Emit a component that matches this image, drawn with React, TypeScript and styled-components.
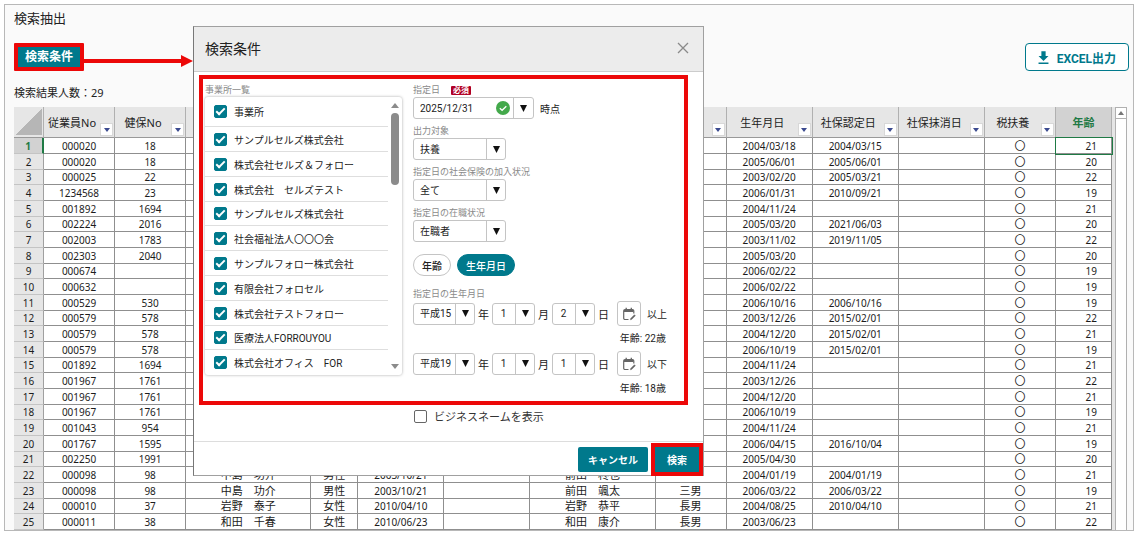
import React from "react";
import styled, { createGlobalStyle, css } from "styled-components";

const TEAL = "#00798c";
const RED = "#ec0808";
const GREEN = "#1f7a45";

const GlobalStyle = createGlobalStyle`
  *, *::before, *::after { box-sizing: border-box; }
  body {
    margin: 0;
    background: #fff;
    color: #222;
    font-family: "Noto Sans", "Noto Sans CJK JP", sans-serif;
  }
  button, input, select { font-family: inherit; margin: 0; }
`;

const Frame = styled.main`
  position: relative;
  margin: 4px 5px 4px 4px;
  padding: 5px 6px 0 9px;
  border: 1px solid #b8b8b8;
  background: #fafafa;
`;

const PageTitle = styled.h1`
  margin: 0;
  font-size: 13px;
  font-weight: 400;
  line-height: 16px;
`;

const Toolbar = styled.div`
  display: flex;
  justify-content: space-between;
  margin: 17px -2px 0 0;
`;

const ConditionButton = styled.button`
  height: 28px;
  padding: 0 7px;
  border: 4px solid ${RED};
  border-radius: 1px;
  background: ${TEAL};
  color: #fff;
  font-size: 12px;
  font-weight: 700;
  line-height: 20px;
`;

const ExcelButton = styled.button`
  display: flex;
  align-items: center;
  gap: 5px;
  height: 28px;
  padding: 0 12px 0 9px;
  border: 1px solid ${TEAL};
  border-radius: 4px;
  background: #fff;
  color: ${TEAL};
  font-family: Roboto, "Noto Sans CJK JP", sans-serif;
  font-size: 12px;
  font-weight: 700;
`;

const ResultCount = styled.p`
  margin: 14px 0 6px;
  font-size: 11px;
  line-height: 16px;
`;

const Sheet = styled.div`
  display: flex;
  gap: 3px;
  background: #e6e6e6;
`;

const Grid = styled.table`
  flex: 1;
  min-width: 0;
  table-layout: fixed;
  border-collapse: separate;
  border-spacing: 0;
  background: #fff;
  color: #1c1c1c;
`;

const HeadCell = styled.th<{ $selected?: boolean }>`
  height: 31px;
  padding: 0;
  border-right: 1px solid #b0b0b0;
  border-bottom: 1px solid #999;
  background: ${(p) => (p.$selected ? "#d2d2d2" : "#e6e6e6")};
  color: ${(p) => (p.$selected ? GREEN : "#222")};
  font-size: 11px;
  font-weight: ${(p) => (p.$selected ? 700 : 400)};
  white-space: nowrap;
`;

const Corner = styled.th`
  padding: 0;
  border-right: 1px solid #b0b0b0;
  border-bottom: 1px solid #999;
  background:
    linear-gradient(to bottom right, transparent 50%, #b6b6b6 50%) 2px 1px / 26px 27px no-repeat,
    #e6e6e6;
`;

const HeadInner = styled.div`
  display: flex;
  align-items: center;
  height: 30px;
`;

const HeadText = styled.span`
  flex: 1;
  text-align: center;
`;

const FilterButton = styled.button`
  display: flex;
  align-items: center;
  justify-content: center;
  align-self: flex-end;
  width: 13px;
  height: 13px;
  margin: 0 1px 1px 0;
  padding: 0;
  border: 1px solid #d8d8d8;
  background: #fff;
`;

const Row = styled.tr`
  height: 16px;
  &:nth-child(3n) { height: 15px; }
`;

const RowHead = styled.th<{ $selected?: boolean }>`
  padding: 0;
  border-right: 1px solid #a0a0a0;
  border-bottom: 1px solid #c4c4c4;
  background: #e6e6e6;
  font-size: 10px;
  font-weight: 400;
  line-height: 14px;
  ${(p) =>
    p.$selected &&
    css`
      border-right: 2px solid ${GREEN};
      background: #d2d2d2;
      color: ${GREEN};
      font-weight: 700;
    `}
`;

const Cell = styled.td<{ $kind?: "kanji" | "age"; $active?: boolean }>`
  padding: ${(p) => (p.$kind === "age" ? "0 14px 0 0" : "0")};
  border-right: 1px solid #8f8f8f;
  border-bottom: 1px solid #8f8f8f;
  font-size: ${(p) => (p.$kind === "kanji" ? 11 : 10)}px;
  line-height: 14px;
  text-align: ${(p) => (p.$kind === "age" ? "right" : "center")};
  white-space: nowrap;
  ${(p) => p.$active && `outline: 1px solid ${GREEN};`}
`;

const GridScroll = styled.div`
  width: 12px;
  border: 1px solid #b0b0b0;
  border-bottom: 0;
  background: #fff;
`;

const GridScrollUp = styled.div`
  display: flex;
  align-items: center;
  justify-content: center;
  height: 11px;
  border-bottom: 1px solid #b0b0b0;
`;

const Arrow = styled.svg`
  position: absolute;
  left: 78px;
  top: 50px;
`;

const Dialog = styled.section`
  position: absolute;
  left: 188px;
  top: 21px;
  width: 511px;
  max-width: calc(100% - 188px);
  border: 1px solid #a0a0a0;
  border-left-color: #777;
  background: #fff;
  font-family: Roboto, "Noto Sans CJK JP", sans-serif;
  font-size: 10px;
`;

const DialogHeader = styled.header`
  display: flex;
  align-items: center;
  justify-content: space-between;
  height: 45px;
  padding: 0 14px 2px 11px;
  border-bottom: 1px solid #ccc;
  background: #ececec;
`;

const DialogTitle = styled.h2`
  margin: 0;
  font-size: 14px;
  font-weight: 400;
`;

const CloseButton = styled.button`
  display: flex;
  padding: 0;
  border: 0;
  background: none;
`;

const Conditions = styled.div`
  display: flex;
  gap: 11px;
  margin: 3px 15px 0 5px;
  padding: 5px 0 0 2px;
  border: 4px solid ${RED};
`;

const Label = styled.label`
  display: flex;
  align-items: center;
  gap: 11px;
  margin-bottom: 1px;
  color: #8a8a8a;
  font-size: 9px;
  line-height: 12px;
`;

const OfficePane = styled.div`
  width: 197px;
`;

const OfficeBox = styled.div`
  display: flex;
  border-radius: 3px;
  box-shadow: 0 0 3px rgba(0, 0, 0, 0.35);
`;

const OfficeList = styled.ul`
  flex: 1;
  margin: 0;
  padding: 0;
  list-style: none;
`;

const OfficeItem = styled.li`
  height: 25px;
  border-bottom: 1px solid #dedede;
  &:first-child { height: 30px; }
  &:nth-child(5n) { height: 24px; }
  &:last-child { border-bottom: 0; }
`;

const OfficeLabel = styled.label`
  display: flex;
  align-items: center;
  gap: 7px;
  height: 100%;
  padding-left: 9px;
  color: #222;
`;

const Checkbox = styled.input`
  flex: none;
  appearance: none;
  width: 13px;
  height: 13px;
  border: 1px solid #666;
  border-radius: 2px;
  background: #fff;
  &:checked {
    border-color: ${TEAL};
    background: ${TEAL};
  }
  &:checked::after {
    content: "";
    display: block;
    width: 9px;
    height: 5px;
    margin: 2px 0 0 1px;
    border: solid #fff;
    border-width: 0 0 2px 2px;
    transform: rotate(-45deg);
  }
`;

const ListScroll = styled.div`
  display: flex;
  flex-direction: column;
  align-items: center;
  width: 14px;
  padding: 6px 0;
`;

const ListThumb = styled.div`
  width: 8px;
  height: 72px;
  margin: 5px 0 auto;
  border-radius: 4px;
  background: #8b8b8b;
`;

const Fields = styled.div`
  display: flex;
  flex: 1;
  flex-direction: column;
`;

const Field = styled.div`
  & + & { margin-top: 6px; }
`;

const Required = styled.span`
  padding: 0 2px;
  border-radius: 1px;
  background: #b00024;
  color: #fff;
  font-size: 8px;
  font-weight: 700;
  line-height: 9px;
`;

const Line = styled.div`
  display: flex;
  align-items: center;
  gap: 6px;
  color: #222;
`;

const DateBox = styled.div`
  display: flex;
  align-items: center;
  width: 121px;
  height: 22px;
  border: 1px solid #c4c4c4;
  border-radius: 3px;
`;

const DateInput = styled.input`
  flex: 1;
  min-width: 0;
  padding: 0 0 0 6px;
  border: 0;
  background: none;
  color: #222;
  font-size: 10px;
`;

const DropButton = styled.button`
  display: flex;
  align-items: center;
  justify-content: center;
  width: 20px;
  height: 20px;
  margin-left: 3px;
  padding: 0;
  border: 0;
  border-left: 1px solid #c4c4c4;
  background: none;
`;

const SelectBox = styled.div<{ $width: number }>`
  position: relative;
  flex: none;
  width: ${(p) => p.$width}px;
  height: 22px;
`;

const NativeSelect = styled.select<{ $centered?: boolean }>`
  appearance: none;
  width: 100%;
  height: 100%;
  padding: ${(p) => (p.$centered ? "0 20px 0 0" : "0 20px 0 6px")};
  border: 1px solid #c4c4c4;
  border-radius: 3px;
  background: #fff;
  color: #222;
  font-size: 10px;
  text-align: ${(p) => (p.$centered ? "center" : "left")};
`;

const SelectArrow = styled.span`
  position: absolute;
  top: 1px;
  right: 1px;
  bottom: 1px;
  display: flex;
  align-items: center;
  justify-content: center;
  width: 19px;
  border-left: 1px solid #c4c4c4;
  pointer-events: none;
`;

const Chips = styled.div`
  display: flex;
  gap: 6px;
  margin: 12px 0;
`;

const Chip = styled.button<{ $on?: boolean }>`
  height: 22px;
  padding: 0 8px;
  border: 1px solid ${(p) => (p.$on ? TEAL : "#c4c4c4")};
  border-radius: 11px;
  background: ${(p) => (p.$on ? TEAL : "#fff")};
  color: ${(p) => (p.$on ? "#fff" : "#222")};
  font-size: 10px;
  font-weight: 500;
`;

const BirthLine = styled.div`
  display: flex;
  align-items: center;
  gap: 3px;
  height: 25px;
  color: #222;
`;

const Unit = styled.span`
  width: 11px;
  font-size: 11px;
  text-align: center;
`;

const CalendarButton = styled.button`
  display: flex;
  align-items: center;
  justify-content: center;
  width: 24px;
  height: 25px;
  margin: 0 3px 0 5px;
  padding: 0;
  border: 1px solid #c4c4c4;
  border-radius: 3px;
  background: #fff;
  color: #666;
`;

const AgeNote = styled.p`
  margin: 0;
  padding-right: 18px;
  color: #222;
  line-height: 25px;
  text-align: right;
`;

const BusinessName = styled.label`
  display: flex;
  align-items: center;
  gap: 7px;
  height: 22px;
  margin: 0 0 14px 220px;
  color: #333;
  font-size: 11px;
`;

const DialogFooter = styled.footer`
  display: flex;
  justify-content: flex-end;
  gap: 7px;
  padding: 5px 4px 3px;
  border-top: 1px solid #ddd;
`;

const ActionButton = styled.button<{ $marked?: boolean }>`
  height: 25px;
  padding: 0 ${(p) => (p.$marked ? 12 : 10)}px;
  border: 0;
  border-radius: ${(p) => (p.$marked ? 0 : 2)}px;
  outline: ${(p) => (p.$marked ? `4px solid ${RED}` : "none")};
  background: ${TEAL};
  color: #fff;
  font-size: 10px;
  font-weight: 700;
`;

const Triangle = ({ w, h, fill, up }: { w: number; h: number; fill: string; up?: boolean }) => (
  <svg width={w} height={h} viewBox="0 0 10 10" preserveAspectRatio="none" aria-hidden="true">
    <path d={up ? "M0 10 5 0l5 10z" : "M0 0h10L5 10z"} fill={fill} />
  </svg>
);

const DownloadIcon = () => (
  <svg width="17" height="17" viewBox="0 0 24 24" fill="currentColor" aria-hidden="true">
    <path d="M5 21h14v-2H5zM19 10h-4V3H9v7H5l7 7z" />
  </svg>
);

const EditCalendarIcon = () => (
  <svg width="14" height="14" viewBox="0 0 14 14" fill="none" stroke="currentColor" aria-hidden="true">
    <path d="M6.5 12.5H3A1.3 1.3 0 0 1 1.7 11.200V3.700A1.300 1.300 0 0 1 3 2.500h7.500a1.300 1.300 0 0 1 1.300 1.200V6.500" strokeWidth="1.200" />
    <path d="M2 4h9.500" strokeWidth="2" />
    <path d="M4.200.8v2M9.300.8v2" strokeWidth="1.300" />
    <path d="M8.300 12.800l.3-1.300 3.800-3.800 1 1-3.800 3.800z" fill="currentColor" strokeWidth=".4" />
  </svg>
);

type SelectProps = { id?: string; label?: string; value: string; width: number; centered?: boolean };

const Select = ({ id, label, value, width, centered }: SelectProps) => (
  <SelectBox $width={width}>
    <NativeSelect id={id} aria-label={label} $centered={centered} defaultValue={value}>
      <option>{value}</option>
    </NativeSelect>
    <SelectArrow>
      <Triangle w={7} h={7} fill="#111" />
    </SelectArrow>
  </SelectBox>
);

type Column = { key: string; width: number; title: string; filter: boolean };

const columns: Column[] = [
  { key: "no", width: 71, title: "従業員No", filter: true },
  { key: "kenpo", width: 71, title: "健保No", filter: true },
  { key: "name", width: 125, title: "", filter: true },
  { key: "sex", width: 47, title: "", filter: true },
  { key: "birth", width: 86, title: "", filter: true },
  { key: "left", width: 86, title: "", filter: true },
  { key: "family", width: 125, title: "", filter: true },
  { key: "relation", width: 71, title: "", filter: true },
  { key: "familyBirth", width: 86, title: "生年月日", filter: true },
  { key: "approved", width: 86, title: "社保認定日", filter: true },
  { key: "removed", width: 86, title: "社保抹消日", filter: true },
  { key: "tax", width: 71, title: "税扶養", filter: true },
  { key: "age", width: 56, title: "年齢", filter: false },
];

type Person = {
  no: string;
  kenpo: string;
  familyBirth: string;
  approved: string;
  age: number;
  detail?: [string, string, string, string, string];
};

const person = (
  no: string,
  kenpo: string,
  familyBirth: string,
  approved: string,
  age: number,
  detail?: Person["detail"],
): Person => ({ no, kenpo, familyBirth, approved, age, detail });

const people: Person[] = [
  person("000020", "18", "2004/03/18", "2004/03/15", 21),
  person("000020", "18", "2005/06/01", "2005/06/01", 20),
  person("000025", "22", "2003/02/20", "2005/03/21", 22),
  person("1234568", "23", "2006/01/31", "2010/09/21", 19),
  person("001892", "1694", "2004/11/24", "", 21),
  person("002224", "2016", "2005/03/20", "2021/06/03", 20),
  person("002003", "1783", "2003/11/02", "2019/11/05", 22),
  person("002303", "2040", "2005/03/20", "", 20),
  person("000674", "", "2006/02/22", "", 19),
  person("000632", "", "2006/02/22", "", 19),
  person("000529", "530", "2006/10/16", "2006/10/16", 19),
  person("000579", "578", "2003/12/26", "2015/02/01", 22),
  person("000579", "578", "2004/12/20", "2015/02/01", 21),
  person("000579", "578", "2006/10/19", "2015/02/01", 19),
  person("001892", "1694", "2004/11/24", "", 21),
  person("001967", "1761", "2003/12/26", "", 22),
  person("001967", "1761", "2004/12/20", "", 21),
  person("001967", "1761", "2006/10/19", "", 19),
  person("001043", "954", "2004/11/24", "", 21),
  person("001767", "1595", "2006/04/15", "2016/10/04", 19),
  person("002250", "1991", "2005/04/30", "", 20),
  person("000098", "98", "2004/01/19", "2004/01/19", 21, ["中島　功介", "男性", "2003/10/21", "前田　柊也", ""]),
  person("000098", "98", "2006/03/22", "2006/03/22", 19, ["中島　功介", "男性", "2003/10/21", "前田　颯太", "三男"]),
  person("000010", "37", "2004/08/25", "2010/04/10", 21, ["岩野　泰子", "女性", "2010/04/10", "岩野　恭平", "長男"]),
  person("000011", "38", "2003/06/23", "", 22, ["和田　千春", "女性", "2010/06/23", "和田　康介", "長男"]),
];

const offices = [
  "事業所",
  "サンプルセルズ株式会社",
  "株式会社セルズ＆フォロー",
  "株式会社　セルズテスト",
  "サンプルセルズ株式会社",
  "社会福祉法人〇〇〇会",
  "サンプルフォロー株式会社",
  "有限会社フォロセル",
  "株式会社テストフォロー",
  "医療法人FORROUYOU",
  "株式会社オフィス　FOR",
];

const births = [
  { year: "平成15", month: "1", day: "2", bound: "以上", age: "年齢: 22歳" },
  { year: "平成19", month: "1", day: "1", bound: "以下", age: "年齢: 18歳" },
];

const PeopleTable = () => (
  <Grid>
    <colgroup>
      <col width={30} />
      {columns.map((c) => (
        <col key={c.key} width={c.width} />
      ))}
    </colgroup>
    <thead>
      <tr>
        <Corner />
        {columns.map((c) => (
          <HeadCell key={c.key} $selected={!c.filter}>
            <HeadInner>
              <HeadText>{c.title}</HeadText>
              {c.filter && (
                <FilterButton aria-label="フィルター">
                  <Triangle w={6} h={4} fill="#3b4a8f" />
                </FilterButton>
              )}
            </HeadInner>
          </HeadCell>
        ))}
      </tr>
    </thead>
    <tbody>
      {people.map((p, i) => {
        const [name, sex, birth, family, relation] = p.detail ?? ["", "", "", "", ""];
        return (
          <Row key={i}>
            <RowHead $selected={i === 0}>{i + 1}</RowHead>
            <Cell>{p.no}</Cell>
            <Cell>{p.kenpo}</Cell>
            <Cell $kind="kanji">{name}</Cell>
            <Cell $kind="kanji">{sex}</Cell>
            <Cell>{birth}</Cell>
            <Cell />
            <Cell $kind="kanji">{family}</Cell>
            <Cell $kind="kanji">{relation}</Cell>
            <Cell>{p.familyBirth}</Cell>
            <Cell>{p.approved}</Cell>
            <Cell />
            <Cell $kind="kanji">〇</Cell>
            <Cell $kind="age" $active={i === 0}>{p.age}</Cell>
          </Row>
        );
      })}
    </tbody>
  </Grid>
);

const SearchDialog = () => (
  <Dialog role="dialog" aria-labelledby="dialog-title">
    <DialogHeader>
      <DialogTitle id="dialog-title">検索条件</DialogTitle>
      <CloseButton aria-label="閉じる">
        <svg width="12" height="12" viewBox="0 0 12 12" stroke="#8a8a8a" strokeWidth="1.3">
          <path d="M1 1l10 10M11 1 1 11" />
        </svg>
      </CloseButton>
    </DialogHeader>
    <Conditions>
      <OfficePane>
        <Label as="div">事業所一覧</Label>
        <OfficeBox>
          <OfficeList>
            {offices.map((office, i) => (
              <OfficeItem key={i}>
                <OfficeLabel>
                  <Checkbox type="checkbox" defaultChecked />
                  {office}
                </OfficeLabel>
              </OfficeItem>
            ))}
          </OfficeList>
          <ListScroll>
            <Triangle w={8} h={5} fill="#8b8b8b" up />
            <ListThumb />
            <Triangle w={8} h={5} fill="#8b8b8b" />
          </ListScroll>
        </OfficeBox>
      </OfficePane>
      <Fields>
        <Field>
          <Label htmlFor="base-date">
            指定日 <Required>必須</Required>
          </Label>
          <Line>
            <DateBox>
              <DateInput id="base-date" defaultValue="2025/12/31" />
              <svg width="14" height="14" viewBox="0 0 14 14" aria-hidden="true">
                <circle cx="7" cy="7" r="7" fill="#43a94b" />
                <path d="M3.8 7.2 6.1 9.3 10.3 5.2" fill="none" stroke="#fff" strokeWidth="1.3" />
              </svg>
              <DropButton aria-label="日付を選択">
                <Triangle w={7} h={7} fill="#111" />
              </DropButton>
            </DateBox>
            時点
          </Line>
        </Field>
        <Field>
          <Label htmlFor="target">出力対象</Label>
          <Select id="target" value="扶養" width={93} />
        </Field>
        <Field>
          <Label htmlFor="insurance">指定日の社会保険の加入状況</Label>
          <Select id="insurance" value="全て" width={93} />
        </Field>
        <Field>
          <Label htmlFor="employment">指定日の在職状況</Label>
          <Select id="employment" value="在職者" width={93} />
        </Field>
        <Chips>
          <Chip>年齢</Chip>
          <Chip $on>生年月日</Chip>
        </Chips>
        <Label as="div">指定日の生年月日</Label>
        {births.map((b) => (
          <React.Fragment key={b.bound}>
            <BirthLine>
              <Select label="年" value={b.year} width={62} />
              <Unit>年</Unit>
              <Select label="月" value={b.month} width={43} centered />
              <Unit>月</Unit>
              <Select label="日" value={b.day} width={43} centered />
              <Unit>日</Unit>
              <CalendarButton aria-label="カレンダー">
                <EditCalendarIcon />
              </CalendarButton>
              {b.bound}
            </BirthLine>
            <AgeNote>{b.age}</AgeNote>
          </React.Fragment>
        ))}
      </Fields>
    </Conditions>
    <BusinessName>
      <Checkbox type="checkbox" />
      ビジネスネームを表示
    </BusinessName>
    <DialogFooter>
      <ActionButton>キャンセル</ActionButton>
      <ActionButton $marked>検索</ActionButton>
    </DialogFooter>
  </Dialog>
);

export default function App() {
  return (
    <>
      <GlobalStyle />
      <Frame>
        <PageTitle>検索抽出</PageTitle>
        <Toolbar>
          <ConditionButton>検索条件</ConditionButton>
          <ExcelButton>
            <DownloadIcon />
            EXCEL出力
          </ExcelButton>
        </Toolbar>
        <ResultCount>検索結果人数：29</ResultCount>
        <Sheet>
          <PeopleTable />
          <GridScroll>
            <GridScrollUp>
              <Triangle w={6} h={4} fill="#777" up />
            </GridScrollUp>
          </GridScroll>
        </Sheet>
        <Arrow width="110" height="12" viewBox="0 0 110 12" aria-hidden="true">
          <path d="M0 4h98V0l12 6-12 6V8H0z" fill={RED} />
        </Arrow>
        <SearchDialog />
      </Frame>
    </>
  );
}
